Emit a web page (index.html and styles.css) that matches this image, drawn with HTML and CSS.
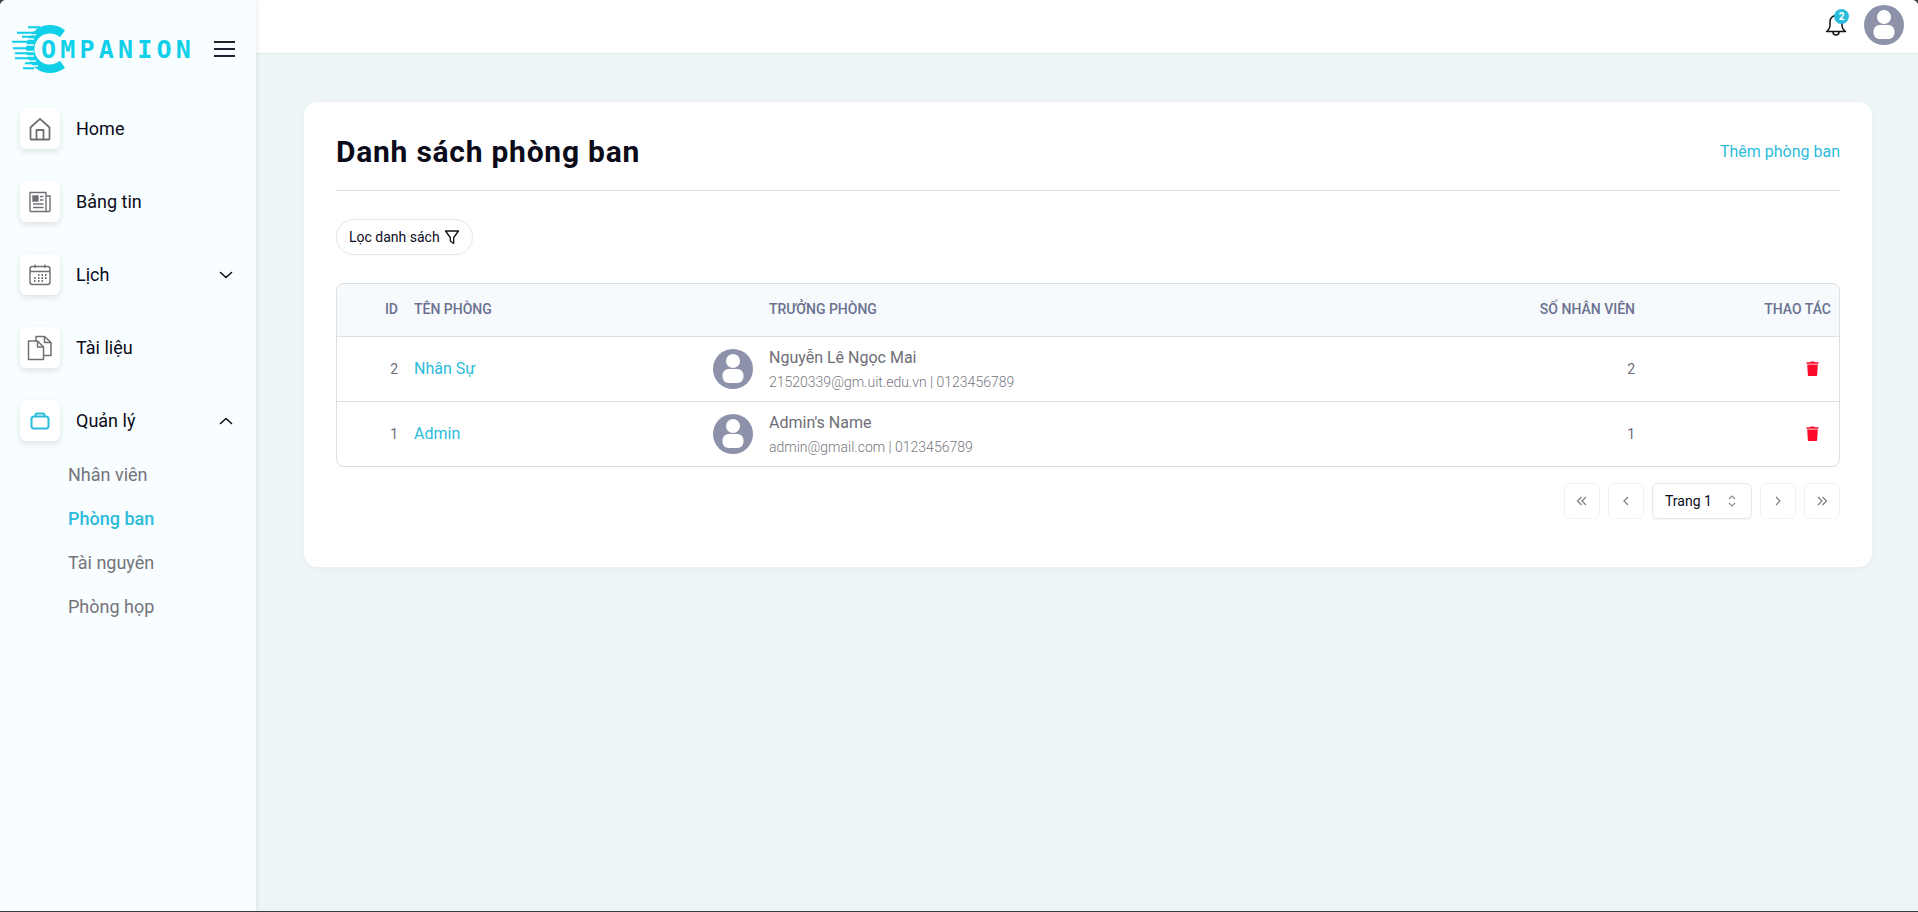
FILE: index.html
```html
<!DOCTYPE html>
<html>
<head>
  <meta charset="utf-8">
  <title>Companion - Danh sách phòng ban</title>
  <link rel="stylesheet" href="styles.css">
</head>
<body>
  <div class="app">
    <aside class="sidebar">
      <div class="brand">
        <div class="logo">
          <svg class="logo-mark" width="62" height="50" viewBox="0 0 62 50">
            <path d="M53 6.300A24 24 0 1 0 53 43.700L48 36.800A15.500 15.500 0 1 1 48 13.200Z" fill="#0fd0e8"/>
            <path d="M8 6h16M8 10.700h16M8 15h14M8 21h14M8 27.500h14M8 32h14M8 37h16M8 42h18" stroke="#f8fdff" stroke-width="1.500"/>
            <path d="M16 3.300h12M5 8.700h16M10 12.700h15M0 17.700h18M1 24.300h19M3 29.300h13M3 34.300h15M13 39.300h12M11 44.300h11" stroke="#0fd0e8" stroke-width="2"/>
          </svg>
          <span class="logo-text">OMPANION</span>
        </div>
        <button class="burger"><span></span><span></span><span></span></button>
      </div>

      <nav class="nav">
        <a class="nav-item">
          <span class="nav-icon">
            <svg width="24" height="24" viewBox="0 0 24 24" fill="none" stroke="#6f6f76" stroke-width="1.800" stroke-linejoin="round"><path d="M2.500 10.500 12 1.800l9.500 8.700V21.500a1 1 0 0 1-1 1H3.500a1 1 0 0 1-1-1z"/><path d="M8.500 22.500V13h7v9.500"/></svg>
          </span>
          <span class="nav-label">Home</span>
        </a>
        <a class="nav-item">
          <span class="nav-icon">
            <svg width="24" height="24" viewBox="0 0 24 24" fill="none" stroke="#6f6f76" stroke-width="1.400"><path d="M2 2.500h16v19H3a1 1 0 0 1-1-1z"/><path d="M18 6h4v14.500a1 1 0 0 1-1 1h-3"/><path d="M5 6h5v5H5z" fill="#6f6f76"/><path d="M12 6.500h3.500M12 10h3.500M5 14h10.500M5 17.500h10.500"/></svg>
          </span>
          <span class="nav-label">Bảng tin</span>
        </a>
        <a class="nav-item">
          <span class="nav-icon">
            <svg width="24" height="24" viewBox="0 0 24 24" fill="none" stroke="#6f6f76" stroke-width="1.400"><rect x="2" y="3.500" width="20" height="18" rx="2.500"/><path d="M2 8.500h20M7 1.500v3.500M17 1.500v3.500"/><path d="M10 12h1.500M13.500 12h1.500M17 12h1.500M6 15h1.500M10 15h1.500M13.500 15h1.500M17 15h1.500M6 18h1.500M10 18h1.500M13.500 18h1.500" stroke-width="1.800"/></svg>
          </span>
          <span class="nav-label">Lịch</span>
          <svg class="chev" width="14" height="14" viewBox="0 0 14 14" fill="none" stroke="#111" stroke-width="1.600" stroke-linecap="round" stroke-linejoin="round"><path d="M1.500 4.500 7 9.500l5.500-5"/></svg>
        </a>
        <a class="nav-item">
          <span class="nav-icon">
            <svg width="26" height="26" viewBox="0 0 26 26" fill="none" stroke="#6f6f76" stroke-width="1.500" stroke-linejoin="round"><path d="M1.500 6h9l6 6v12.500h-15z"/><path d="M10.500 6v6h6"/><path d="M9 6V1.500h8.500l6.500 6v13h-7.500"/><path d="M17.500 1.500v6h6.500"/></svg>
          </span>
          <span class="nav-label">Tài liệu</span>
        </a>
        <a class="nav-item">
          <span class="nav-icon">
            <svg width="20" height="18" viewBox="0 0 20 18" fill="none" stroke="#2bbcdc" stroke-width="2"><rect x="1.500" y="4.500" width="17" height="12" rx="2.500"/><path d="M5.500 4.500V3a1.500 1.500 0 0 1 1.500-1.500h6A1.500 1.500 0 0 1 14.500 3v1.500"/></svg>
          </span>
          <span class="nav-label">Quản lý</span>
          <svg class="chev" width="14" height="14" viewBox="0 0 14 14" fill="none" stroke="#111" stroke-width="1.600" stroke-linecap="round" stroke-linejoin="round"><path d="M1.500 9.500 7 4.500l5.500 5"/></svg>
        </a>
        <div class="subnav">
          <a>Nhân viên</a>
          <a class="active">Phòng ban</a>
          <a>Tài nguyên</a>
          <a>Phòng họp</a>
        </div>
      </nav>
    </aside>

    <div class="main">
      <header class="topbar">
        <div class="bell">
          <svg width="24" height="24" viewBox="0 0 24 24" fill="none" stroke="#111" stroke-width="1.500" stroke-linejoin="round"><path d="M2.500 18.500c2-1.500 3.500-3.500 3.500-6.500V8.500a6 6 0 0 1 12 0V12c0 3 1.500 5 3.500 6.500z"/><path d="M9 19a3 3 0 0 0 6 0"/></svg>
          <span class="badge">2</span>
        </div>
        <svg class="avatar-top" width="40" height="40" viewBox="0 0 40 40"><circle cx="20" cy="20" r="20" fill="#8d92aa"/><circle cx="20" cy="12" r="7" fill="#fff"/><rect x="9.500" y="20" width="21" height="14" rx="6" fill="#fff"/></svg>
      </header>

      <main class="content">
        <section class="card">
          <div class="card-head">
            <h1>Danh sách phòng ban</h1>
            <a class="add-link">Thêm phòng ban</a>
          </div>

          <button class="filter-btn">
            Lọc danh sách
            <svg width="16" height="16" viewBox="0 0 16 16" fill="none" stroke="#111" stroke-width="1.300" stroke-linejoin="round"><path d="M1.500 2h13L9.700 8.500V14.500L6.300 12V8.500z"/></svg>
          </button>

          <div class="table-wrap">
            <table>
              <thead>
                <tr>
                  <th class="col-id">ID</th>
                  <th class="col-name">TÊN PHÒNG</th>
                  <th class="col-head">TRƯỞNG PHÒNG</th>
                  <th class="col-count">SỐ NHÂN VIÊN</th>
                  <th class="col-act">THAO TÁC</th>
                </tr>
              </thead>
              <tbody>
                <tr>
                  <td class="col-id">2</td>
                  <td class="col-name"><a>Nhân Sự</a></td>
                  <td class="col-head">
                    <div class="person">
                      <svg width="40" height="40" viewBox="0 0 40 40"><circle cx="20" cy="20" r="20" fill="#8d92aa"/><circle cx="20" cy="12" r="7" fill="#fff"/><rect x="9.500" y="20" width="21" height="14" rx="6" fill="#fff"/></svg>
                      <div>
                        <div class="person-name">Nguyễn Lê Ngọc Mai</div>
                        <div class="person-sub">21520339@gm.uit.edu.vn | 0123456789</div>
                      </div>
                    </div>
                  </td>
                  <td class="col-count">2</td>
                  <td class="col-act">
                    <svg width="13" height="15" viewBox="0 0 14 16" fill="#fb0a2a"><path d="M4.500 1.200 5 .4h4l.5.8H13.500v1.600H.5V1.200z"/><path d="M1.300 3.800h11.400L12 15a1 1 0 0 1-1 1H3a1 1 0 0 1-1-1z"/></svg>
                  </td>
                </tr>
                <tr>
                  <td class="col-id">1</td>
                  <td class="col-name"><a>Admin</a></td>
                  <td class="col-head">
                    <div class="person">
                      <svg width="40" height="40" viewBox="0 0 40 40"><circle cx="20" cy="20" r="20" fill="#8d92aa"/><circle cx="20" cy="12" r="7" fill="#fff"/><rect x="9.500" y="20" width="21" height="14" rx="6" fill="#fff"/></svg>
                      <div>
                        <div class="person-name">Admin's Name</div>
                        <div class="person-sub">admin@gmail.com | 0123456789</div>
                      </div>
                    </div>
                  </td>
                  <td class="col-count">1</td>
                  <td class="col-act">
                    <svg width="13" height="15" viewBox="0 0 14 16" fill="#fb0a2a"><path d="M4.500 1.200 5 .4h4l.5.8H13.500v1.600H.5V1.200z"/><path d="M1.300 3.800h11.400L12 15a1 1 0 0 1-1 1H3a1 1 0 0 1-1-1z"/></svg>
                  </td>
                </tr>
              </tbody>
            </table>
          </div>

          <div class="pager">
            <button class="page-btn"><svg width="14" height="14" viewBox="0 0 14 14" fill="none" stroke="#7d7d85" stroke-width="1.200"><path d="M6.500 3 2.500 7l4 4M11 3 7 7l4 4"/></svg></button>
            <button class="page-btn"><svg width="14" height="14" viewBox="0 0 14 14" fill="none" stroke="#7d7d85" stroke-width="1.200"><path d="M9 3 5 7l4 4"/></svg></button>
            <div class="page-select">
              Trang 1
              <svg width="10" height="14" viewBox="0 0 10 14" fill="none" stroke="#8a8a92" stroke-width="1.100"><path d="M2 5 5 2l3 3M2 9l3 3 3-3"/></svg>
            </div>
            <button class="page-btn"><svg width="14" height="14" viewBox="0 0 14 14" fill="none" stroke="#7d7d85" stroke-width="1.200"><path d="M5 3l4 4-4 4"/></svg></button>
            <button class="page-btn"><svg width="14" height="14" viewBox="0 0 14 14" fill="none" stroke="#7d7d85" stroke-width="1.200"><path d="M3 3l4 4-4 4M7.500 3l4 4-4 4"/></svg></button>
          </div>
        </section>
      </main>
    </div>
  </div>
</body>
</html>
```

FILE: styles.css
```css
* {
  box-sizing: border-box;
}
body {
  margin: 0;
  font-family: Roboto, "Noto Sans", sans-serif;
  background: #3c3c3c;
  color: #0b0b1a;
}
button {
  font-family: inherit;
  cursor: pointer;
}
.app {
  display: flex;
  height: 911px;
  overflow: hidden;
  background: #edf5f7;
  border-radius: 6px 6px 0 0;
}
.sidebar {
  width: 256px;
  flex-shrink: 0;
  background: #f8fdff;
  box-shadow: 1px 0 4px rgba(0,0,0,0.08);
  z-index: 1;
}
.brand {
  display: flex;
  align-items: center;
  justify-content: space-between;
  height: 48px;
  margin-top: 25px;
  padding: 0 21px 0 12px;
}
.logo {
  display: flex;
  align-items: center;
}
.logo-mark {
  flex-shrink: 0;
}
.logo-text {
  margin-left: -33px;
  font-family: "DejaVu Sans Mono", monospace;
  font-size: 25px;
  font-weight: 700;
  letter-spacing: 4.200px;
  color: #0fd0e8;
}
.burger {
  display: flex;
  flex-direction: column;
  gap: 5px;
  width: 21px;
  padding: 0;
  border: none;
  background: none;
}
.burger span {
  height: 2px;
  background: #22222e;
}
.nav {
  display: flex;
  flex-direction: column;
  padding: 0 20px;
  margin-top: 35px;
}
.nav-item {
  display: flex;
  align-items: center;
  height: 41px;
  margin-bottom: 32px;
  font-size: 18px;
}
.nav-icon {
  display: flex;
  align-items: center;
  justify-content: center;
  width: 40px;
  height: 41px;
  margin-right: 16px;
  background: #fff;
  border-radius: 6px;
  box-shadow: 0 3px 6px rgba(0,0,0,0.10);
}
.nav-label {
  flex: 1;
}
.chev {
  margin-right: 3px;
}
.subnav {
  display: flex;
  flex-direction: column;
  margin-top: -20px;
  padding-left: 48px;
  font-size: 18px;
  color: #74747c;
}
.subnav a {
  height: 44px;
  line-height: 44px;
}
.subnav .active {
  color: #2bbcdc;
  font-weight: 500;
}
.main {
  flex: 1;
  min-width: 0;
}
.topbar {
  display: flex;
  align-items: center;
  justify-content: flex-end;
  gap: 16px;
  height: 54px;
  padding: 0 14px 4px 0;
  background: #fff;
  border-bottom: 1px solid #dfe7ec;
}
.bell {
  position: relative;
  width: 24px;
  height: 24px;
}
.badge {
  position: absolute;
  top: -4px;
  left: 10px;
  width: 15px;
  height: 15px;
  border-radius: 50%;
  background: #2bbcdc;
  color: #fff;
  font-size: 10px;
  font-weight: 700;
  line-height: 15px;
  text-align: center;
}
.content {
  padding: 48px 46px 48px 48px;
}
.card {
  padding: 24px 32px 48px;
  background: #fff;
  border-radius: 14px;
  box-shadow: 0 2px 6px rgba(0,0,0,0.03);
}
.card-head {
  display: flex;
  align-items: center;
  justify-content: space-between;
  height: 65px;
  border-bottom: 1px solid #dce2e6;
  margin-bottom: 28px;
}
.card-head h1 {
  margin: 0 0 13px;
  font-size: 30px;
  font-weight: 700;
  letter-spacing: 0.750px;
  color: #0b0b1a;
}
.add-link {
  margin-bottom: 13px;
  font-size: 16px;
  color: #2bbcdc;
}
.filter-btn {
  display: inline-flex;
  align-items: center;
  gap: 4px;
  height: 36px;
  padding: 0 12px;
  border: 1px solid #e4e6f2;
  border-radius: 18px;
  background: #fff;
  color: #0b0b1a;
  font-size: 14px;
  box-shadow: 0 1px 2px rgba(0,0,0,0.03);
}
.table-wrap {
  margin-top: 28px;
  border: 1px solid #d9e0e6;
  border-radius: 8px;
  overflow: hidden;
}
table {
  width: 100%;
  border-collapse: collapse;
  table-layout: fixed;
}
th {
  height: 52px;
  padding: 0 0 2px;
  background: #f6fafd;
  border-bottom: 1px solid #d9e0e6;
  font-size: 14px;
  font-weight: 500;
  color: #6b7190;
  text-align: left;
}
td {
  height: 65px;
  padding: 0;
  font-size: 14px;
  color: #6e6e76;
  border-bottom: 1px solid #d9e0e6;
}
tbody tr:last-child td {
  border-bottom: none;
}
.col-id {
  width: 61px;
  text-align: right;
}
.col-name {
  width: 371px;
  padding-left: 16px;
}
.col-name a {
  font-size: 16px;
  color: #2bbcdc;
}
.col-head {
  padding-left: 0;
}
.col-count {
  width: 240px;
  text-align: right;
}
.col-act {
  width: 204px;
  padding-right: 8px;
  text-align: right;
}
td.col-act {
  padding-right: 20px;
}
td.col-act svg {
  display: block;
  margin-left: auto;
}
.person {
  display: flex;
  align-items: center;
  gap: 16px;
  margin-left: -56px;
}
.person svg {
  flex-shrink: 0;
}
.person-name {
  font-size: 16px;
  color: #6e6e76;
}
.person-sub {
  margin-top: 7px;
  font-size: 14px;
  font-weight: 300;
  color: #77777f;
}
.pager {
  display: flex;
  justify-content: flex-end;
  align-items: center;
  gap: 8px;
  margin-top: 16px;
}
.page-btn {
  display: flex;
  align-items: center;
  justify-content: center;
  width: 36px;
  height: 36px;
  padding: 0;
  background: #fff;
  border: 1px solid #f0f1f7;
  border-radius: 6px;
}
.page-select {
  display: flex;
  align-items: center;
  justify-content: space-between;
  width: 100px;
  height: 36px;
  padding: 0 14px 0 12px;
  border: 1px solid #e4e6f2;
  border-radius: 6px;
  font-size: 14px;
  color: #0b0b1a;
  box-shadow: 0 1px 2px rgba(0,0,0,0.05);
}
```
